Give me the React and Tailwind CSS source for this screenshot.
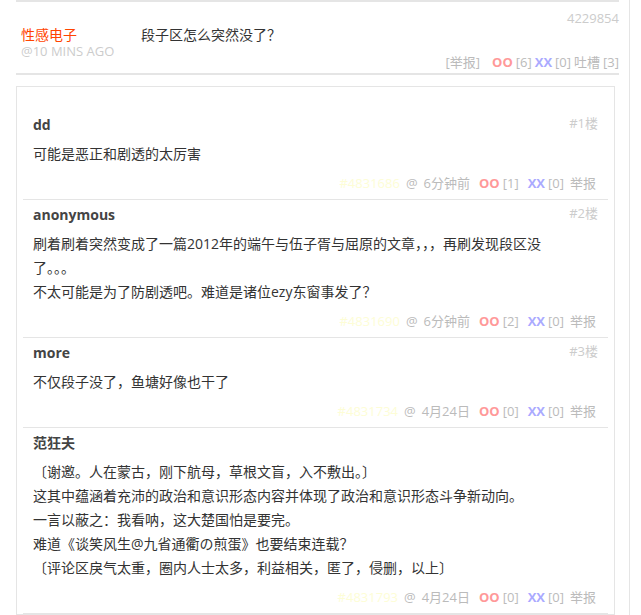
import React from 'react';

const comments = [
  {
    name: 'dd',
    floor: 1,
    lines: ['可能是恶正和剧透的太厉害'],
    id: '#4831686',
    time: '6分钟前',
    oo: 1,
    xx: 0,
  },
  {
    name: 'anonymous',
    floor: 2,
    lines: [
      '刷着刷着突然变成了一篇2012年的端午与伍子胥与屈原的文章，，，再刷发现段区没',
      '了。。。',
      '不太可能是为了防剧透吧。难道是诸位ezy东窗事发了？',
    ],
    id: '#4831690',
    time: '6分钟前',
    oo: 2,
    xx: 0,
  },
  {
    name: 'more',
    floor: 3,
    lines: ['不仅段子没了，鱼塘好像也干了'],
    id: '#4831734',
    time: '4月24日',
    oo: 0,
    xx: 0,
  },
  {
    name: '范狂夫',
    floor: null,
    lines: [
      '〔谢邀。人在蒙古，刚下航母，草根文盲，入不敷出。〕',
      '这其中蕴涵着充沛的政治和意识形态内容并体现了政治和意识形态斗争新动向。',
      '一言以蔽之：我看呐，这大楚国怕是要完。',
      '难道《谈笑风生@九省通衢の煎蛋》也要结束连载？',
      '〔评论区戾气太重，圈内人士太多，利益相关，匿了，侵删，以上〕',
    ],
    id: '#4831793',
    time: '4月24日',
    oo: 0,
    xx: 0,
  },
];

const Comment = ({ c, first }) => (
  <div className={`mx-[6px] border-b border-[#e5e5e5] px-[10px] ${first ? 'pt-[27px]' : 'pt-[4px]'} pb-[5px]`}>
    <div className="flex items-center justify-between h-[20px]">
      <span className="text-[14px] font-bold text-[#444]">{c.name}</span>
      {c.floor && <span className="text-[13px] text-[#ccc]">#{c.floor}楼</span>}
    </div>
    <div className="mt-[8px] text-[14px] leading-[24px] text-[#333]">
      {c.lines.map((l, i) => (
        <p key={i}>{l}</p>
      ))}
    </div>
    <div className="mt-[8px] flex h-[20px] items-center justify-end pr-[2px] text-[13px] text-[#bbb]">
      <span className="text-[#fdfdd6]">{c.id}</span>
      <span className="ml-[6px]">@</span>
      <span className="ml-[6px]">{c.time}</span>
      <span className="ml-[9px] font-bold text-[#ff9999]">OO</span>
      <span className="ml-[3px]">[{c.oo}]</span>
      <span className="ml-[9px] font-bold text-[#aaaaff]">XX</span>
      <span className="ml-[3px]">[{c.xx}]</span>
      <span className="ml-[6px]">举报</span>
    </div>
  </div>
);

export default function App() {
  return (
    <div
      className="w-[630px] min-h-[615px] border-r border-[#e5e5e5] bg-white pl-4 pr-[10px]"
      style={{ fontFamily: '"Open Sans", "Noto Sans CJK SC", sans-serif' }}
    >
      <div className="border-t-2 border-[#e5e5e5]">
        <div className="flex justify-end pt-[8px] text-[13px] leading-[16px] text-[#ccc]">4229854</div>
        <div className="flex pl-[5px]">
          <div className="w-[120px]">
            <div className="text-[14px] leading-[18px] text-[#ff4400]">性感电子</div>
            <div className="text-[13px] leading-[15px] text-[#ccc]">@10 MINS AGO</div>
          </div>
          <div className="text-[14px] leading-[18px] text-[#333]">段子区怎么突然没了？</div>
        </div>
        <div className="-mt-[3px] flex h-[14px] items-center justify-end text-[13px] text-[#bbb]">
          <span>[举报]</span>
          <span className="ml-[12px] font-bold text-[#ff9999]">OO</span>
          <span className="ml-[3px]">[6]</span>
          <span className="ml-[3px] font-bold text-[#aaaaff]">XX</span>
          <span className="ml-[3px]">[0]</span>
          <span className="ml-[3px]">吐槽</span>
          <span className="ml-[3px]">[3]</span>
        </div>
      </div>
      <div className="mt-[3px] border-t-2 border-[#e5e5e5]" />
      <div className="mt-[11px] mr-[4px] border border-[#e5e5e5]">
        {comments.map((c, i) => (
          <Comment key={i} c={c} first={i === 0} />
        ))}
      </div>
    </div>
  );
}
